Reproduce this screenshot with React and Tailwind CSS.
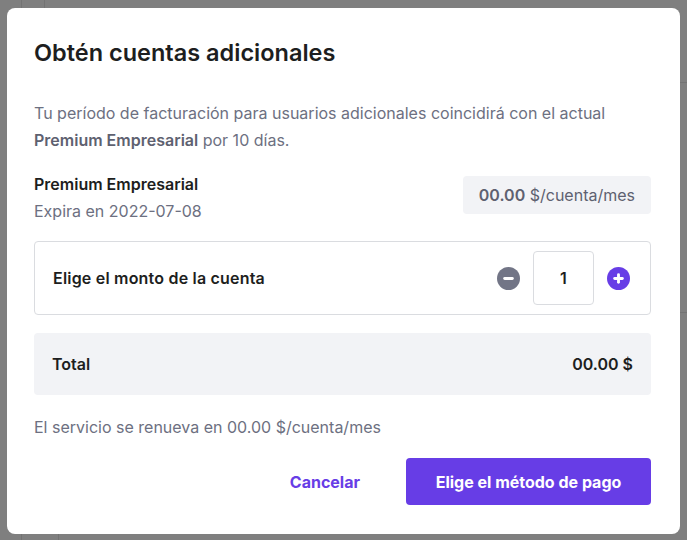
import React from "react";

export default function App() {
  return (
    <div className="relative w-[687px] h-[540px] bg-[#7f7f7f] overflow-hidden" style={{ fontFamily: "Inter, 'Noto Sans', sans-serif" }}>
      {/* faint background page lines */}
      <div className="absolute left-[21px] top-0 w-px h-[8px] bg-[#737373]" />
      <div className="absolute left-[44px] top-0 w-px h-[8px] bg-[#737373]" />
      <div className="absolute left-[21px] bottom-0 w-px h-[6px] bg-[#737373]" />
      <div className="absolute left-[58px] bottom-0 w-px h-[6px] bg-[#737373]" />
      <div className="absolute right-0 top-[82px] w-[7px] h-px bg-[#737373]" />
      <div className="absolute right-0 top-[312px] w-[7px] h-px bg-[#737373]" />

      <div className="absolute left-[7px] top-[8px] w-[673px] h-[526px] bg-white rounded-[8px] pl-[27px] pr-[29px] pt-[30px] flex flex-col">
        <h1 className="text-[23.5px] font-semibold text-[#1d1e20] leading-[30px]">Obtén cuentas adicionales</h1>

        <p className="mt-[32px] text-[16px] leading-[27px] text-[#6d7081] whitespace-nowrap">
          Tu período de facturación para usuarios adicionales coincidirá con el actual
          <br />
          <span className="font-semibold text-[#5e6170]">Premium Empresarial</span> por 10 días.
        </p>

        <div className="mt-[17px] flex items-start justify-between">
          <div className="flex flex-col">
            <span className="text-[16px] leading-[27px] font-semibold text-[#1d1e20]">Premium Empresarial</span>
            <span className="text-[16px] leading-[27px] text-[#6d7081]">Expira en 2022-07-08</span>
          </div>
          <div className="mt-[5px] h-[38px] px-[16px] rounded-[4px] bg-[#f2f3f6] flex items-center text-[16px] text-[#5e6170]">
            <span className="font-semibold">00.00</span>&nbsp;$/cuenta/mes
          </div>
        </div>

        <div className="mt-[16px] h-[74px] border border-[#dadce0] rounded-[4px] flex items-center justify-between pl-[18px] pr-[20px]">
          <span className="text-[16px] font-semibold tracking-[0.2px] text-[#1d1e20]">Elige el monto de la cuenta</span>
          <div className="flex items-center gap-[13px]">
            <svg width="23" height="23" viewBox="0 0 24 24">
              <circle cx="12" cy="12" r="12" fill="#727586" />
              <rect x="6.5" y="10.5" width="11" height="3" rx="1.5" fill="white" />
            </svg>
            <div className="w-[61px] h-[54px] border border-[#dadce0] rounded-[4px] flex items-center justify-center text-[16px] font-semibold text-[#1d1e20]">1</div>
            <svg width="23" height="23" viewBox="0 0 24 24">
              <circle cx="12" cy="12" r="12" fill="#673de6" />
              <rect x="6.5" y="10.5" width="11" height="3" rx="1.5" fill="white" />
              <rect x="10.5" y="6.5" width="3" height="11" rx="1.5" fill="white" />
            </svg>
          </div>
        </div>

        <div className="mt-[18px] h-[62px] bg-[#f2f3f6] rounded-[4px] flex items-center justify-between px-[18px]">
          <span className="text-[16px] font-semibold text-[#1d1e20]">Total</span>
          <span className="text-[16px] font-semibold text-[#1d1e20]">00.00 $</span>
        </div>

        <p className="mt-[20px] text-[16px] leading-[24px] text-[#6d7081]">El servicio se renueva en 00.00 $/cuenta/mes</p>

        <div className="mt-[19px] flex items-center justify-end gap-[46px]">
          <button className="text-[16px] font-bold text-[#673de6]">Cancelar</button>
          <button className="h-[47px] w-[245px] rounded-[4px] bg-[#673de6] text-white text-[16px] font-bold">Elige el método de pago</button>
        </div>
      </div>
    </div>
  );
}
